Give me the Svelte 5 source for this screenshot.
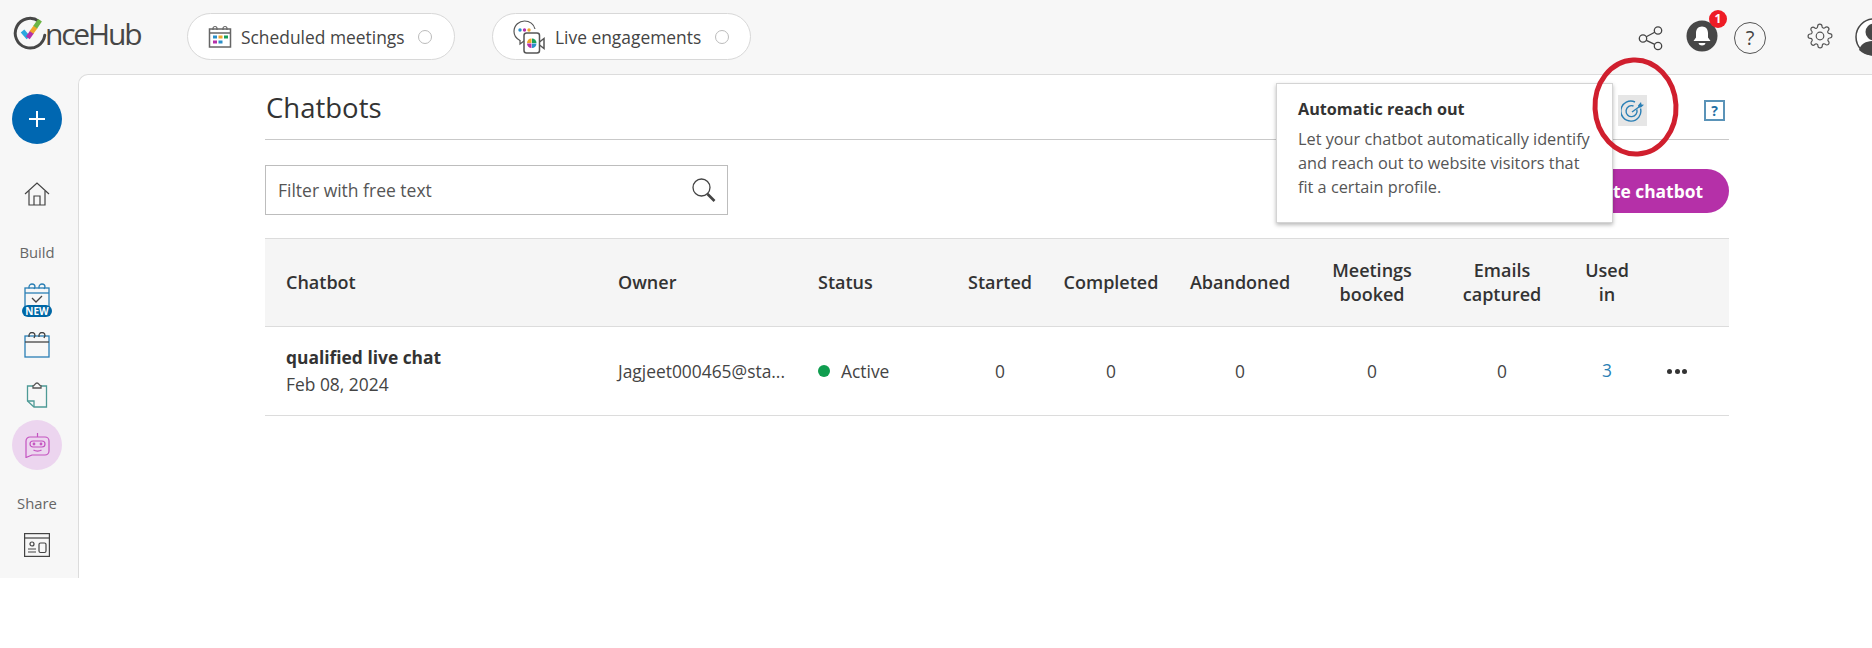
<script>
  const headers = [
    { label: 'Chatbot', cls: 'left first' },
    { label: 'Owner', cls: 'left' },
    { label: 'Status', cls: 'left' },
    { label: 'Started', cls: '' },
    { label: 'Completed', cls: '' },
    { label: 'Abandoned', cls: '' },
    { label: 'Meetings booked', cls: 'wrap1' },
    { label: 'Emails captured', cls: 'wrap2' },
    { label: 'Used in', cls: 'wrap3' },
    { label: '', cls: '' }
  ];
</script>

<div class="app">
  <header class="topbar">
    <div class="logo">
      <svg class="logo-mark" width="36" height="36" viewBox="0 0 34 34" fill="none">
        <path d="M24.500 6A14 14 0 1 0 30 19" stroke="#474747" stroke-width="2.800" stroke-linecap="round"/>
        <path d="M9 15l5.500 6.500" stroke="#2aa7df" stroke-width="4.400"/>
        <path d="M14 21.500l4-5.500" stroke="#b530a8" stroke-width="4.400"/>
        <path d="M17.500 16.500l4-5.500" stroke="#f0a62b" stroke-width="4.400"/>
        <path d="M21 11.500l4.500-6.500" stroke="#6cb544" stroke-width="4.400"/>
      </svg>
      <span>nceHub</span>
    </div>
    <div class="pill pill-a">
      <svg width="24" height="24" viewBox="0 0 24 24" fill="none">
        <rect x="1.500" y="4" width="21" height="18" stroke="#666" stroke-width="1.500" fill="#fff"/>
        <path d="M1.500 8h21" stroke="#666" stroke-width="1.500"/>
        <path d="M5 5V3.500a2 2 0 0 1 4 0V5M15 5V3.500a2 2 0 0 1 4 0V5" stroke="#666" stroke-width="1.200"/>
        <rect x="5" y="10.500" width="4" height="3" fill="#2a8fc9"/>
        <rect x="10.500" y="10.500" width="4" height="3" fill="#f0a62b"/>
        <rect x="16" y="10.500" width="4" height="3" fill="#1aa05a"/>
        <rect x="5" y="15.500" width="4" height="3" fill="#b530a8"/>
        <rect x="10.500" y="15.500" width="4" height="3" fill="#2a8fc9"/>
      </svg>
      <span>Scheduled meetings</span>
      <i class="radio"></i>
    </div>
    <div class="pill pill-b">
      <svg width="32" height="38" viewBox="0 0 32 38" fill="none">
        <path d="M7 22.500C3 20.500 1 17.500 1 13.500 1 7 6.500 3 11.500 3S21 6 22 11" stroke="#555" stroke-width="1.200"/>
        <path d="M7 22v4l4-3" stroke="#555" stroke-width="1.200"/>
        <circle cx="7" cy="12" r="1.700" fill="#2a8fc9"/>
        <circle cx="11.500" cy="12" r="1.700" fill="#b530a8"/>
        <circle cx="16" cy="12" r="1.700" fill="#f0a62b"/>
        <rect x="11" y="15" width="15.500" height="20" rx="2.500" stroke="#555" stroke-width="1.500" fill="#fff"/>
        <path d="M26.500 24l4.500-3.500v10L26.500 27" stroke="#555" stroke-width="1.500"/>
        <path d="M18.500 20.500a4.500 4.500 0 0 0-4.500 4.500h4.500z" fill="#f0a62b"/>
        <path d="M19 20.500a4.500 4.500 0 0 1 4.500 4.500H19z" fill="#1aa05a"/>
        <path d="M14 25.500a4.500 4.500 0 0 0 4.500 4.500v-4.500z" fill="#b530a8"/>
        <path d="M19 30a4.500 4.500 0 0 0 4.500-4.500H19z" fill="#2a8fc9"/>
      </svg>
      <span>Live engagements</span>
      <i class="radio"></i>
    </div>
    <div class="top-icons">
      <svg class="ic-share" width="26" height="26" viewBox="0 0 26 26" fill="none" stroke="#444" stroke-width="1.300">
        <circle cx="5" cy="13.500" r="3.700"/><circle cx="20" cy="5.500" r="3.700"/><circle cx="20" cy="21" r="3.700"/>
        <path d="M8.300 11.800l8.400-4.500M8.300 15.300l8.400 4"/>
      </svg>
      <div class="bell">
        <svg width="32" height="32" viewBox="0 0 32 32">
          <circle cx="16" cy="16" r="15.500" fill="#474747"/>
          <path d="M16 6.500c-3.800 0-6 2.800-6 6.500v4.500L7.500 21h17L22 17.500V13c0-3.700-2.200-6.500-6-6.500z" fill="#fff"/>
          <path d="M12.500 23h7c-.5 1.800-1.800 2.500-3.500 2.500s-3-.7-3.500-2.500z" fill="#fff"/>
        </svg>
        <b class="badge">1</b>
      </div>
      <div class="help">?</div>
      <svg class="ic-gear" width="26" height="26" viewBox="0 0 24 24" fill="none" stroke="#555" stroke-width="1.100" stroke-linejoin="round">
        <circle cx="12" cy="12" r="3.500"/>
        <path d="M19.400 15a1.650 1.650 0 0 0 .33 1.820l.06.06a2 2 0 1 1-2.830 2.830l-.06-.06a1.650 1.650 0 0 0-2.800 1.170V21a2 2 0 1 1-4 0v-.09a1.650 1.650 0 0 0-2.880-1.120l-.06.06a2 2 0 1 1-2.830-2.830l.06-.06a1.650 1.650 0 0 0-1.170-2.800H3a2 2 0 1 1 0-4h.09a1.650 1.650 0 0 0 1.120-2.880l-.06-.06a2 2 0 1 1 2.830-2.830l.06.06a1.650 1.650 0 0 0 2.800-1.170V3a2 2 0 1 1 4 0v.09a1.650 1.650 0 0 0 2.880 1.120l.06-.06a2 2 0 1 1 2.830 2.830l-.06.06a1.650 1.650 0 0 0 1.170 2.800H21a2 2 0 1 1 0 4h-.09a1.650 1.650 0 0 0-1.510 1.160z"/>
      </svg>
      <svg class="avatar" width="38" height="38" viewBox="0 0 38 38" fill="none">
        <circle cx="19" cy="19" r="18" fill="#fff" stroke="#474747" stroke-width="1.500"/>
        <circle cx="19" cy="14" r="8.500" fill="#474747"/>
        <path d="M4 32c2-7 8-9 15-9s13 2 15 9c-4 4-9 5.500-15 5.500S8 36 4 32z" fill="#474747"/>
      </svg>
    </div>
  </header>

  <div class="body">
    <nav class="side">
      <button class="plus" aria-label="Create">
        <svg width="20" height="20" viewBox="0 0 20 20"><path d="M10 2v16M2 10h16" stroke="#fff" stroke-width="2"/></svg>
      </button>
      <svg class="home" width="26" height="24" viewBox="0 0 26 24" fill="none" stroke="#444" stroke-width="1.200">
        <path d="M1 12L13 1l12 11"/><path d="M5 9v14h16V9"/><path d="M10 23v-9h6v9"/>
      </svg>
      <div class="side-label build">Build</div>
      <div class="new-cal">
        <svg width="26" height="27" viewBox="0 0 26 27" fill="none" stroke="#2a7fb5" stroke-width="1.300">
          <rect x="1" y="5" width="24" height="21"/><path d="M1 10h24"/>
          <path d="M5 5.500V4a3 3 0 0 1 6 0l-1 2M15 5.500V4a3 3 0 0 1 6 0l-1 2"/>
          <path d="M8 15l4 4 6-6" stroke="#444"/>
        </svg>
        <b>NEW</b>
      </div>
      <svg class="cal" width="26" height="26" viewBox="0 0 26 26" fill="none" stroke="#2a7fb5" stroke-width="1.300">
        <rect x="1" y="4" width="24" height="21"/><path d="M1 10h24" stroke="#444"/>
        <path d="M5 5V3.500a3 3 0 0 1 6 0l-1 2.500M15 5V3.500a3 3 0 0 1 6 0l-1 2.500" stroke="#444"/>
      </svg>
      <svg class="clip" width="22" height="26" viewBox="0 0 22 26" fill="none" stroke="#4d9a96" stroke-width="1.300">
        <path d="M7 4H1.500v15L8 25h12.500V4H15"/><path d="M7 6V4c1.500 0 2-3 4-3s2.500 3 4 3v2z" stroke="#555"/><path d="M1.500 19H8v6" />
      </svg>
      <div class="bot">
        <svg width="25" height="26" viewBox="0 0 25 26" fill="none" stroke="#c452c0" stroke-width="1.200">
          <path d="M12.500 1v4"/><path d="M5 5h15a4 4 0 0 1 4 4v10a4 4 0 0 1-4 4H7l-6 2.500V9a4 4 0 0 1 4-4z"/>
          <rect x="5" y="9" width="15" height="6" rx="3"/>
          <circle cx="9" cy="12" r=".8"/><circle cx="16" cy="12" r=".8"/><path d="M8.500 18c2 1.400 6 1.400 8 0"/>
        </svg>
      </div>
      <div class="side-label share">Share</div>
      <svg class="web" width="26" height="24" viewBox="0 0 26 24" fill="none" stroke="#444" stroke-width="1.200">
        <rect x=".6" y=".6" width="24.800" height="22.800"/><path d="M.6 5h24.800"/>
        <circle cx="8" cy="11" r="2"/><path d="M4 16h8M4 19h8"/><rect x="15" y="10" width="7" height="9.500" rx="1.500"/>
      </svg>
    </nav>

    <main class="main">
      <div class="content">
        <div class="title-row">
          <h1>Chatbots</h1>
          <div class="title-tools">
            <span class="target">
              <svg width="24" height="24" viewBox="0 0 24 24" fill="none" stroke="#2a7fb5" stroke-width="1.400">
                <path d="M19.500 9.500A10 10 0 1 1 14 3"/>
                <path d="M15.800 10.500A5.500 5.500 0 1 1 12.500 7"/>
                <path d="M11 13L20 6.500"/>
                <path d="M17 6.500l3-3.500 .5 2.500 2.500.3-3 2.700h-2.500z" fill="#2a7fb5" stroke="none"/>
              </svg>
            </span>
            <span class="qbox">?</span>
          </div>
        </div>

        <div class="toolbar">
          <div class="search">
            <span>Filter with free text</span>
            <svg width="26" height="26" viewBox="0 0 26 26" fill="none" stroke="#444" stroke-width="1.300">
              <circle cx="10.500" cy="10.500" r="8.500"/>
              <path d="M16.500 17l7 7" stroke-width="2.600"/>
            </svg>
          </div>
          <button class="create">Create chatbot</button>
        </div>

        <div class="table">
          <div class="grid head">
            {#each headers as h}
              <div class={'th ' + h.cls}>{h.label}</div>
            {/each}
          </div>
          <div class="grid row">
            <div class="name left first"><strong>qualified live chat</strong><span>Feb 08, 2024</span></div>
            <div class="left owner">Jagjeet000465@sta...</div>
            <div class="left status"><i class="dot"></i>Active</div>
            <div>0</div><div>0</div><div>0</div><div>0</div><div>0</div>
            <div class="link">3</div>
            <div class="more"><i></i><i></i><i></i></div>
          </div>
        </div>
      </div>

      <div class="tip">
        <h2>Automatic reach out</h2>
        <p>Let your chatbot automatically identify and reach out to website visitors that fit a certain profile.</p>
      </div>
    </main>
  </div>

  <svg class="ring" width="92" height="104" viewBox="0 0 92 104" fill="none">
    <ellipse cx="44.500" cy="52" rx="40.500" ry="47" stroke="#d01f2e" stroke-width="5" transform="rotate(-3 44.500 52)"/>
  </svg>
</div>

<style>
  :global(body) {
    margin: 0;
    background: #fff;
    font-family: "Open Sans", "Liberation Sans", sans-serif;
    color: #333;
    overflow: hidden;
  }
  .app {
    position: relative;
    width: 1872px;
    height: 578px;
    background: #f7f7f7;
    overflow: hidden;
  }
  .topbar {
    height: 74px;
    display: flex;
    align-items: flex-start;
    box-sizing: border-box;
    padding-left: 13px;
    position: relative;
  }
  .logo {
    width: 174px;
    display: flex;
    align-items: center;
    height: 36px;
    margin-top: 15px;
    color: #474747;
    font-size: 30px;
    letter-spacing: -2.200px;
    font-family: "Open Sans", sans-serif;
  }
  .logo-mark { flex: none; margin-right: -4px; }
  .pill {
    height: 47px;
    box-sizing: border-box;
    margin-top: 13px;
    background: #fff;
    border: 1px solid #d8d8d8;
    border-radius: 24px;
    display: flex;
    align-items: center;
    font-size: 17.400px;
    color: #444;
  }
  .pill-a { width: 268px; padding-left: 20px; gap: 9px; }
  .pill-b { width: 259px; margin-left: 37px; padding-left: 20px; gap: 10px; }
  .radio {
    width: 14px;
    height: 14px;
    box-sizing: border-box;
    border: 1.500px solid #bbb;
    border-radius: 50%;
    margin-left: 4px;
  }
  .top-icons {
    position: absolute;
    left: 1638px;
    top: 0;
    height: 74px;
    width: 234px;
    display: flex;
    align-items: flex-start;
    overflow: hidden;
  }
  .ic-share { margin-top: 25px; flex: none; }
  .bell { position: relative; margin-left: 22px; margin-top: 20px; width: 32px; height: 32px; flex: none; }
  .badge {
    position: absolute;
    right: -9px;
    top: -10px;
    width: 18px;
    height: 18px;
    border-radius: 50%;
    background: #ee1c25;
    color: #fff;
    font-size: 12px;
    line-height: 18px;
    text-align: center;
    font-weight: 700;
  }
  .help {
    margin-left: 16px;
    margin-top: 22px;
    width: 32px;
    height: 32px;
    flex: none;
    box-sizing: border-box;
    border: 1.500px solid #555;
    border-radius: 50%;
    font-size: 20px;
    line-height: 29px;
    text-align: center;
    color: #444;
  }
  .ic-gear { margin-left: 41px; margin-top: 23px; flex: none; }
  .avatar { margin-left: 22px; margin-top: 18px; flex: none; }

  .body { display: flex; height: 504px; }
  .side {
    width: 78px;
    flex: none;
    display: flex;
    flex-direction: column;
    align-items: center;
    box-sizing: border-box;
  }
  .side > * { margin-left: -4px; flex: none; }
  .plus {
    width: 50px;
    height: 50px;
    border: 0;
    padding: 0;
    margin-top: 20px;
    border-radius: 50%;
    background: #0067b1;
    display: flex;
    align-items: center;
    justify-content: center;
  }
  .home { margin-top: 38px; }
  .side-label { font-size: 14.800px; color: #666; line-height: 20px; }
  .build { margin-top: 36px; }
  .new-cal { position: relative; margin-top: 21px; height: 34px; width: 30px; text-align: center; }
  .new-cal svg { display: block; margin: 0 auto; }
  .new-cal b {
    position: absolute;
    left: 0;
    right: 0;
    bottom: 0;
    height: 12px;
    border-radius: 6px;
    background: #0067a5;
    color: #fff;
    font-size: 10px;
    line-height: 12px;
  }
  .cal { margin-top: 15px; }
  .clip { margin-top: 24px; }
  .bot {
    width: 50px;
    height: 50px;
    margin-top: 12px;
    border-radius: 50%;
    background: #ecd5ef;
    display: flex;
    align-items: center;
    justify-content: center;
  }
  .share { margin-top: 23px; }
  .web { margin-top: 20px; }

  .main {
    flex: 1;
    position: relative;
    background: #fff;
    border-top: 1px solid #dcdcdc;
    border-left: 1px solid #dcdcdc;
    border-top-left-radius: 10px;
  }
  .content { width: 1464px; margin-left: 186px; }
  .title-row {
    height: 65px;
    box-sizing: border-box;
    padding-top: 5px;
    border-bottom: 1px solid #c9c9c9;
    display: flex;
    align-items: center;
    justify-content: space-between;
  }
  h1 { margin: 0 0 3px 1px; font-size: 27.500px; font-weight: 400; color: #333; line-height: 36px; }
  .title-tools { display: flex; align-items: center; gap: 57px; padding: 2px 4px 0 0; }
  .target {
    width: 29px;
    height: 31px;
    background: #e6e6e6;
    display: flex;
    align-items: center;
    justify-content: center;
  }
  .qbox {
    width: 21px;
    height: 21px;
    box-sizing: border-box;
    border: 2px solid #5a93b8;
    color: #1f6fa5;
    font-weight: 700;
    font-size: 14px;
    line-height: 17px;
    text-align: center;
  }
  .toolbar {
    margin-top: 25px;
    display: flex;
    justify-content: space-between;
    align-items: flex-start;
  }
  .search {
    width: 463px;
    height: 50px;
    box-sizing: border-box;
    border: 1px solid #bdbdbd;
    display: flex;
    align-items: center;
    justify-content: space-between;
    padding: 0 10px 0 12px;
    font-size: 17.500px;
    color: #555;
  }
  .create {
    height: 44px;
    margin-top: 4px;
    padding: 0 26px;
    border: 0;
    border-radius: 22px;
    background: #b530a8;
    color: #fff;
    font: 700 17.400px "Open Sans", sans-serif;
  }
  .table { margin-top: 23px; }
  .grid {
    display: grid;
    grid-template-columns: 353px 200px 146px 72px 150px 108px 156px 104px 106px 34px;
    align-items: center;
    text-align: center;
    border-bottom: 1px solid #dcdcdc;
    font-size: 17.400px;
    color: #444;
  }
  .head {
    height: 89px;
    box-sizing: border-box;
    background: #f5f5f5;
    border-top: 1px solid #dcdcdc;
  }
  .th { font-weight: 600; color: #333; font-size: 18px; line-height: 24px; margin-top: -1px; }
  .wrap1 { padding: 0 30px; }
  .wrap2 { padding: 0 12px; }
  .wrap3 { padding: 0 30px; }
  .row { height: 89px; box-sizing: border-box; }
  .left { text-align: left; }
  .first { padding-left: 21px; }
  .name { display: flex; flex-direction: column; gap: 3px; line-height: 24px; margin-top: -2px; }
  .name strong { font-weight: 700; color: #333; font-size: 17.400px; }
  .owner { margin-top: -1px; }
  .status { display: flex; align-items: center; gap: 11px; margin-top: -1px; }
  .dot { width: 12px; height: 12px; border-radius: 50%; background: #0f9d4f; }
  .link { color: #2a7fb5; margin-top: -3px; }
  .more { display: flex; justify-content: center; gap: 2.500px; }
  .more i { width: 5px; height: 5px; border-radius: 50%; background: #333; }

  .tip {
    position: absolute;
    left: 1197px;
    top: 8px;
    width: 337px;
    height: 140px;
    box-sizing: border-box;
    background: #fff;
    border: 1px solid #d4d4d4;
    box-shadow: 0 2px 4px rgba(0, 0, 0, .28);
    padding: 13px 14px 0 21px;
  }
  .tip h2 { margin: 0; font-size: 16.200px; font-weight: 700; color: #333; line-height: 24px; }
  .tip p { margin: 6px 0 0; font-size: 16.300px; line-height: 24px; color: #555; }
  .ring { position: absolute; left: 1591px; top: 55px; }
</style>
